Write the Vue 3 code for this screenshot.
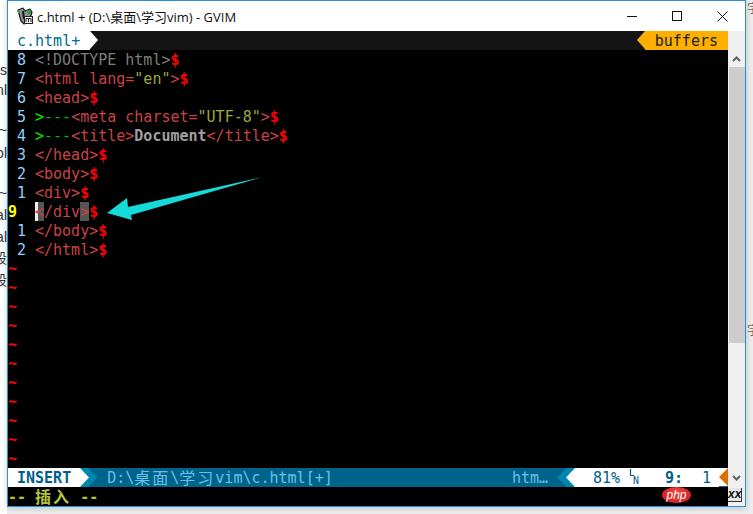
<script setup>
const lines = [
  { n: '8', parts: [['t', '<!DOCTYPE html>'], ['d', '$']] },
  { n: '7', parts: [['r', '<html lang='], ['s', '"en"'], ['r', '>'], ['d', '$']] },
  { n: '6', parts: [['r', '<head>'], ['d', '$']] },
  { n: '5', parts: [['g', '>'], ['g2', '---'], ['r', '<meta charset='], ['s', '"UTF-8"'], ['r', '>'], ['d', '$']] },
  { n: '4', parts: [['g', '>'], ['g2', '---'], ['r', '<title>'], ['b', 'Document'], ['r', '</title>'], ['d', '$']] },
  { n: '3', parts: [['r', '</head>'], ['d', '$']] },
  { n: '2', parts: [['r', '<body>'], ['d', '$']] },
  { n: '1', parts: [['r', '<div>'], ['d', '$']] },
  { n: '9', cur: true, parts: [['cursor', '<'], ['r', '/div'], ['m', '>'], ['d', '$']] },
  { n: '1', parts: [['r', '</body>'], ['d', '$']] },
  { n: '2', parts: [['r', '</html>'], ['d', '$']] }
]
const tildes = Array.from({ length: 11 }, (_, i) => i)
const leftBits = [
  { t: '.s', y: 62 }, { t: 'nl', y: 82 }, { t: '~', y: 122 }, { t: 'ol', y: 145 },
  { t: '~', y: 185 }, { t: 'al', y: 207 }, { t: 'al', y: 229 }, { t: '段', y: 250 }, { t: '段', y: 272 }
]
const rightBits = [{ t: '字', y: 0 }, { t: '字', y: 322 }]
</script>

<template>
  <div class="screen">
    <span v-for="(b, i) in leftBits" :key="'l' + i" class="bit-left" :style="{ top: b.y + 'px' }">{{ b.t }}</span>
    <span v-for="(b, i) in rightBits" :key="'r' + i" class="bit-right" :style="{ top: b.y + 'px' }">{{ b.t }}</span>
    <div class="window">
      <div class="titlebar">
        <svg class="app-icon" width="18" height="18" viewBox="0 0 18 18">
          <path d="M2 3 L7 1 L9 4 L14 2 L16 5 L13 15 L8 17 L5 14 Z" fill="#8d938d" stroke="#1d1d1d" stroke-width="1.2" stroke-linejoin="round" />
          <path d="M6 4 L8 4 L9 12 L7 12 Z" fill="#1c1c1c" />
          <path d="M11 3 L15 3 L15 7 L12 7 Z" fill="#2f9a3a" />
          <path d="M1 4 L3 3 L4 6 L2 6 Z" fill="#3aa845" />
          <rect x="8.5" y="9.5" width="8" height="7" fill="#f2f2f2" stroke="#222" />
          <path d="M10 15 L10 11.5 L12.5 11.5 L12.5 15 M12.5 11.5 L15 11.5 L15 15" fill="none" stroke="#222" />
        </svg>
        <span class="title">c.html + (D:\桌面\学习vim) - GVIM</span>
        <div class="controls">
          <svg width="10" height="1" viewBox="0 0 10 1"><rect width="10" height="1" fill="#111" /></svg>
          <svg width="10" height="10" viewBox="0 0 10 10"><rect x="0.5" y="0.5" width="9" height="9" fill="none" stroke="#111" /></svg>
          <svg width="11" height="11" viewBox="0 0 11 11"><path d="M0.5 0.5 L10.5 10.5 M10.5 0.5 L0.5 10.5" stroke="#111" fill="none" /></svg>
        </div>
      </div>
      <div class="client">
        <div class="vim">
          <div class="tabline">
            <span class="tab">c.html+</span>
            <span class="tab-arrow"></span>
            <span class="grow"></span>
            <span class="buf-arrow"></span>
            <span class="buffers">buffers</span>
          </div>
          <div class="editor">
            <div v-for="(l, i) in lines" :key="i" class="line">
              <span class="num" :class="{ cur: l.cur }">{{ l.n }}</span>
              <span v-for="(p, j) in l.parts" :key="j" :class="p[0]">{{ p[1] }}</span>
            </div>
            <div v-for="t in tildes" :key="'t' + t" class="line tilde">~</div>
            <svg class="arrow" width="720" height="418" viewBox="8 50 720 418">
              <path d="M263 177 L128 207 L127 198 L107 213 L132 220 L131 215 Z" fill="#16d9d9" />
            </svg>
          </div>
          <div class="status">
            <span class="mode">INSERT</span>
            <svg class="sep" width="18" height="19" viewBox="0 0 18 19">
              <polygon points="0,0 8,0 17.5,9.5 8,19 0,19" fill="#0087af" />
              <polygon points="0,0 9,9.5 0,19" fill="#fff" />
            </svg>
            <span class="path">D:\<span class="cjk">桌面</span>\<span class="cjk">学习</span>vim\c.html[+]</span>
            <span class="grow"></span>
            <span class="ftype">htm…</span>
            <svg class="sep" width="18" height="19" viewBox="0 0 18 19">
              <polygon points="18,0 10,0 0,9.5 10,19 18,19" fill="#0087af" />
              <polygon points="18,0 9,9.5 18,19" fill="#fff" />
            </svg>
            <span class="info">
              <span class="pct">81%</span>
              <svg class="ln" width="36" height="19" viewBox="0 0 36 19">
                <path d="M1.5 1 V7.5 H5" fill="none" stroke="#005f87" stroke-width="1.2" />
                <text x="4" y="16" font-size="10" fill="#005f87">N</text>
              </svg>
              <span class="pos">9:</span>
              <span class="col">1</span>
            </span>
            <span class="warn-arrow"></span>
          </div>
          <div class="cmd">-- <span class="cjk">插入</span> --</div>
        </div>
        <div class="scrollbar">
          <svg class="chev up" width="9" height="6" viewBox="0 0 9 6"><path d="M1 5 L4.5 1.5 L8 5" fill="none" stroke="#606060" stroke-width="2" /></svg>
          <div class="thumb"></div>
          <div class="track"></div>
          <svg class="chev down" width="9" height="6" viewBox="0 0 9 6"><path d="M1 1 L4.5 4.5 L8 1" fill="none" stroke="#606060" stroke-width="2" /></svg>
        </div>
      </div>
    </div>
    <div class="php">php</div>
    <div class="xx">xx</div>
  </div>
</template>

<style>
html, body { margin: 0; background: #fff; overflow: hidden; }
</style>

<style scoped>
.screen { width: 753px; height: 514px; position: relative; overflow: hidden; background: linear-gradient(to right, #fff 7px, #ececec 7px); padding-left: 7px; box-sizing: border-box; font-family: "DejaVu Sans Mono", "Noto Sans CJK SC", monospace; }
.bit-left { position: absolute; right: 746px; font: 14px/16px "Liberation Sans", "Noto Sans CJK SC", sans-serif; color: #333; white-space: nowrap; }
.bit-right { position: absolute; left: 747px; font: 12px/16px "Noto Sans CJK SC", sans-serif; color: #666; white-space: nowrap; }
.window { width: 739px; height: 507px; background: #fff; border: 1px solid #2b8fe0; box-sizing: border-box; display: flex; flex-direction: column; position: relative; box-shadow: 0 1px 6px rgba(0,0,0,.2); }
.titlebar { height: 30px; display: flex; align-items: center; padding-left: 8px; flex: none; }
.app-icon { margin-right: 3px; }
.title { font: 13px "Open Sans", "Noto Sans CJK SC", sans-serif; color: #111; flex: 1; }
.controls { display: flex; align-items: center; gap: 35px; padding-right: 17px; }
.client { flex: 1; display: flex; min-height: 0; }
.vim { width: 720px; background: #000; display: flex; flex-direction: column; font-size: 15px; }
.tabline { height: 19px; display: flex; background: #141414; line-height: 21px; flex: none; }
.tab { background: #fff; color: #006b8f; padding-left: 9px; padding-right: 10px; height: 19px; }
.tab-arrow { width: 0; height: 0; border-top: 9.5px solid transparent; border-bottom: 9.5px solid transparent; border-left: 8px solid #fff; }
.grow { flex: 1; }
.buf-arrow { width: 0; height: 0; border-top: 9.5px solid transparent; border-bottom: 9.5px solid transparent; border-right: 8px solid #ffaf00; }
.buffers { background: #ffaf00; color: #222; padding: 0 10px; height: 19px; }
.editor { flex: 1; position: relative; min-height: 0; }
.line { height: 19px; line-height: 21px; white-space: pre; color: #c94444; }
.num { display: inline-block; width: 27px; padding-left: 9px; color: #8fd0ff; box-sizing: border-box; height: 19px; vertical-align: top; }
.num.cur { padding-left: 0; color: #ffff00; font-weight: bold; }
.t { color: #7d7d7d; }
.r { color: #c94444; }
.s { color: #9aaa3c; }
.d { color: #ff0000; font-weight: bold; }
.g { color: #00f000; }
.g2 { color: #00c000; }
.b { color: #a0a0a0; font-weight: bold; }
.cursor { background: #555; color: #c94444; box-shadow: inset 3px 0 0 #eee; display: inline-block; height: 19px; vertical-align: top; }
.m { background: #555; color: #c94444; display: inline-block; height: 19px; vertical-align: top; }
.tilde { color: #ff0000; font-weight: bold; }
.arrow { position: absolute; left: 0; top: 0; }
.status { height: 19px; background: #00638c; display: flex; line-height: 21px; flex: none; color: #6cc0e8; }
.mode { background: #fff; color: #005f87; font-weight: bold; padding: 0 9px; height: 19px; }
.sep { flex: none; }
.path { margin-left: 9px; white-space: pre; height: 19px; }
.cjk { display: inline-block; font-family: "Noto Sans CJK SC", sans-serif; font-size: 16px; letter-spacing: 2px; line-height: 19px; vertical-align: top; }
.ftype { margin-right: 9px; height: 19px; }
.info { background: #fff; color: #005f87; height: 19px; display: flex; padding-left: 18px; width: 144px; box-sizing: border-box; }
.pct { width: 36px; }
.ln { flex: none; }
.pos { width: 37px; font-weight: bold; }
.warn-arrow { width: 0; height: 0; border-top: 9.5px solid transparent; border-bottom: 9.5px solid transparent; border-right: 9px solid #e06c00; background: #fff; }
.cmd { height: 19px; line-height: 21px; color: #b4c33c; font-weight: bold; white-space: pre; flex: none; }
.scrollbar { flex: 1; background: #f0f0f0; display: flex; flex-direction: column; align-items: center; }
.chev { flex: none; }
.chev.up { margin: 25px 0 5px; }
.chev.down { margin: 5px 0 25px; }
.thumb { width: 16px; height: 276px; background: #cdcdcd; flex: none; }
.track { flex: 1; }
.php { position: absolute; left: 662px; top: 487px; width: 29px; height: 16px; border-radius: 50%; background: radial-gradient(ellipse at 50% 30%, #f04040, #d01818); color: #fff; font: italic 12px/16px "Liberation Sans", sans-serif; text-align: center; }
.xx { position: absolute; left: 728px; top: 488px; width: 14px; height: 14px; background: #e6e6e6; border: 1px solid #333; border-width: 0 1px 1px 0; box-sizing: border-box; color: #111; font: italic bold 12px/12px "Liberation Sans", sans-serif; text-align: center; }
</style>
